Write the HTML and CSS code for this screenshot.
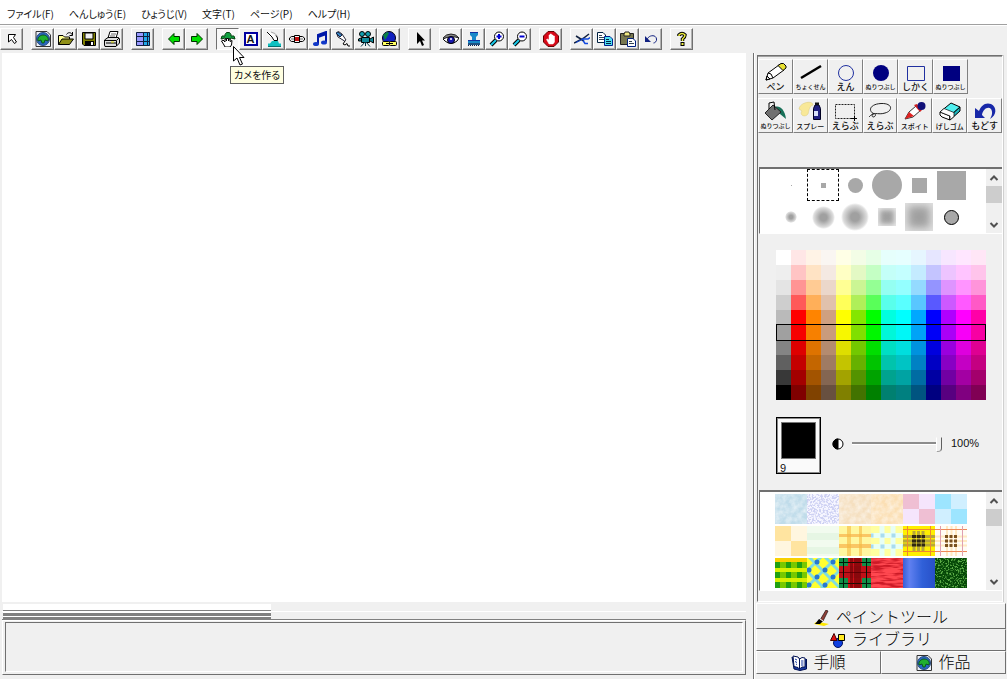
FILE: index.html
```html
<!DOCTYPE html>
<html lang="ja">
<head>
<meta charset="utf-8">
<title>ペイントツール</title>
<link rel="stylesheet" href="styles.css">
</head>
<body>
<svg class="defs" aria-hidden="true">
  <defs>
    <symbol id="doc" viewBox="0 0 16 16"><path d="M1 0.5H12L15.500 4V15.500H1Z" fill="#e8eef8" stroke="#333"/><circle cx="8" cy="8" r="6.500" fill="#2868c0" stroke="#284878"/><path d="M3 10C2 7 5 4 8 4C12 4 14 7 13 10L10 9L9 12H7L6 9Z" fill="#20b030" stroke="#084810" stroke-width=".8"/></symbol>
    <symbol id="arrow" viewBox="0 0 16 16"><path d="M2.500 8L8 2.500V5.500H13.500V10.500H8V13.500Z" fill="#00e000" stroke="#003000"/></symbol>
    <symbol id="lens" viewBox="0 0 16 16"><path d="M7 9L2 14" stroke="#000" stroke-width="4"/><path d="M7 9L2 14" stroke="#18c8e8" stroke-width="2"/><circle cx="10" cy="5.500" r="4.500" fill="#fff" stroke="#000"/></symbol>
    <symbol id="up" viewBox="0 0 10 10"><path d="M1.500 7L5 3.500L8.500 7" fill="none" stroke="#505050" stroke-width="2"/></symbol>
    <symbol id="down" viewBox="0 0 10 10"><path d="M1.500 3L5 6.500L8.500 3" fill="none" stroke="#505050" stroke-width="2"/></symbol>
    <filter id="soft" x="0" y="0" width="1" height="1"><feTurbulence type="fractalNoise" baseFrequency=".18" numOctaves="3"/><feColorMatrix values="0 0 0 0 1  0 0 0 0 1  0 0 0 0 1  1 0 0 0 -.3"/></filter>
    <filter id="specks" x="0" y="0" width="1" height="1"><feTurbulence type="fractalNoise" baseFrequency=".55" numOctaves="2"/><feColorMatrix values="0 0 0 0 .62  0 0 0 0 .64  0 0 0 0 .9  6 0 0 0 -2.600"/></filter>
    <filter id="leaf" x="0" y="0" width="1" height="1" color-interpolation-filters="sRGB"><feTurbulence type="fractalNoise" baseFrequency=".6" numOctaves="2"/><feColorMatrix values="0 0 0 0 .36  0 0 0 0 .68  0 0 0 0 .28  6 0 0 0 -3"/></filter>
    <filter id="cloth" x="0" y="0" width="1" height="1" color-interpolation-filters="sRGB"><feTurbulence type="fractalNoise" baseFrequency=".07 .4" numOctaves="2"/><feColorMatrix values="0 0 0 0 .8  0 0 0 0 .1  0 0 0 0 .15  4 0 0 0 -1.700"/></filter>
  </defs>
</svg>
<div class="app">
  <nav class="menu">
    <button>ファイル(F)</button><button>へんしゅう(E)</button><button>ひょうじ(V)</button><button>文字(T)</button><button>ページ(P)</button><button>ヘルプ(H)</button>
  </nav>
  <div class="toolbar">
    <div class="group">
      <button class="tool" aria-label="もどる"><svg viewBox="0 0 16 16"><path d="M4.500 3.500H11.500L9.500 6.500L12.500 11L10.500 12.500L7.500 8.500L4.500 11Z" fill="#fff" stroke="#000"/></svg></button>
    </div>
    <div class="group">
      <button class="tool" aria-label="新規"><svg><use href="#doc"/></svg></button>
      <button class="tool" aria-label="開く"><svg viewBox="0 0 16 16"><path d="M.5 13.500V4.500H5L6.500 6H11.500V8" fill="#ffff90" stroke="#000"/><path d="M.5 13.500L4 8H15.500L11.500 13.500Z" fill="#909018" stroke="#000"/><path d="M8.500 3.500C10 1 13 1 14.500 4M14.500 1V4.500H11.500" fill="none" stroke="#000"/></svg></button>
      <button class="tool" aria-label="保存"><svg viewBox="0 0 16 16"><path d="M1.500 1.500H14.500V14.500H3L1.500 13Z" fill="#808000" stroke="#000"/><path d="M4 2H12V8H4Z" fill="#f0f0f0" stroke="#000"/><path d="M4 10H13V14H4Z"/><path d="M10 11H12V14H10Z" fill="#fff"/></svg></button>
      <button class="tool" aria-label="印刷"><svg viewBox="0 0 16 16"><path d="M4 7L6 .5H14L12 7" fill="#fff" stroke="#000"/><path d="M7 3H12M6 5H11" stroke="#666"/><path d="M.5 9L4 6.500H14.500L15.500 8V12L12 15.500H1L.5 14Z" fill="#ddd" stroke="#000"/><path d="M1 9.500H12.500L15 7M12.500 10V15M2 12H12" fill="none" stroke="#000"/><path d="M7 11H10" stroke="#e0e000"/></svg></button>
    </div>
    <div class="group">
      <button class="tool" aria-label="画面"><svg viewBox="0 0 16 16"><path d="M1 1H15V15H1Z" fill="#9898ff"/><path d="M9 1H15V15H9Z" fill="#20a8e8"/><path d="M1.500 1.500H14.500V14.500H1.500ZM8.500 1V15M12.500 1V15M1 10.500H9M1 5.500H9M9 5.500H15M9 10.500H15" fill="none" stroke="#102040"/></svg></button>
    </div>
    <div class="group">
      <button class="tool" aria-label="前のページ"><svg><use href="#arrow"/></svg></button>
      <button class="tool" aria-label="次のページ"><svg class="flip"><use href="#arrow"/></svg></button>
    </div>
    <div class="group">
      <div class="tip-anchor">
        <button class="tool pressed" aria-label="カメを作る"><svg viewBox="0 0 16 16"><path d="M5 3.500L6.500 1.500H9.500L11 3.500V5H14L15 8L11 7L9 10H7L5 7L1 8L2 5H5Z" fill="#10a040" stroke="#064010"/><path d="M4 14L1.500 10L3 9L5 11V8H6.500V10V7.500H8.500V10V8H10V10.500L12 9.500L11.500 14L10 16H5Z" fill="#fff" stroke="#000"/></svg></button>
        <div class="tooltip" role="tooltip">カメを作る</div>
        <svg class="cursor" viewBox="0 0 12 20"><path d="M.5 .5V15L4 12L7 19L9.500 18L6.500 11.500H11Z" fill="#fff" stroke="#000"/></svg>
      </div>
      <button class="tool letter" aria-label="テキスト"><span>A</span></button>
      <button class="tool" aria-label="ボタン"><svg viewBox="0 0 16 16"><path d="M1 1L4 1.500L7 3L10 6L11.500 9.500H8L6 7L3 5Z" fill="#fff"/><path d="M1 1L6 6L8 9.500H11.500V7L10 4" fill="none" stroke="#000"/><path d="M5 1L9 2.500L12 6" fill="none" stroke="#aaa"/><path d="M4 12.500L6 10H12L13 12.500H15V15H2V12.500Z" fill="#10c0c0"/><path d="M2 15.500H15" stroke="#067070"/></svg></button>
      <button class="tool" aria-label="スライダー"><svg viewBox="0 0 16 16"><path d="M2.500 5.500H13.500L15.500 7V9L13.500 10.500H2.500L.5 9V7Z" fill="#eee" stroke="#000"/><path d="M2 8H14" stroke="#777"/><path d="M5.500 4.500H10.500V11.500H5.500Z" fill="#f4f4f4" stroke="#000"/><path d="M6 6H10V10H6Z" fill="#c01010"/></svg></button>
      <button class="tool" aria-label="メロディ"><svg viewBox="0 0 16 16"><path d="M6 13V4L14 1V11M6 6L14 3" fill="none" stroke="#0018a8" stroke-width="2"/><ellipse cx="4" cy="13" rx="3" ry="2" fill="#1038c8"/><ellipse cx="12" cy="11.500" rx="3" ry="2" fill="#1038c8"/></svg></button>
      <button class="tool" aria-label="録音"><svg viewBox="0 0 16 16"><path d="M1.500 2L3.500 .5L7 3L11 9L9.500 10L3 6Z" fill="#fff" stroke="#223"/><path d="M1 2L3 1L7 4L5 6Z" fill="#3888c8" stroke="#124"/><path d="M10 10L8 13L10 14L12 12.500L13 15H15" fill="none" stroke="#000"/></svg></button>
      <button class="tool" aria-label="ビデオ"><svg viewBox="0 0 16 16"><circle cx="4" cy="3" r="2.500" fill="#10a0b0" stroke="#000"/><circle cx="10" cy="3" r="2.500" fill="#10a0b0" stroke="#000"/><path d="M3.500 6.500H11.500V11.500H3.500ZM12 8L15.500 6V12L12 10M3 7L.5 8V10H3" fill="#108898" stroke="#000"/><path d="M7.500 11V15M7 11L3 15.500M8 11L12 15.500" stroke="#034"/></svg></button>
      <button class="tool" aria-label="リンク"><svg viewBox="0 0 16 16"><circle cx="8" cy="7" r="6.500" fill="#1020c0" stroke="#001"/><path d="M2 4L6 1L8 2L6 6L4 9Z" fill="#088048"/><rect x="1.500" y="10.500" width="7" height="4" rx="1" fill="#ffff60" stroke="#000"/><rect x="8.500" y="10.500" width="7" height="4" rx="1" fill="#ffff60" stroke="#000"/><path d="M5 12.500H12" stroke="#000"/></svg></button>
    </div>
    <div class="group">
      <button class="tool" aria-label="選ぶ"><svg viewBox="0 0 16 16"><path d="M5 1V13L8 10L10 15L12 14L10 9.500H13Z"/></svg></button>
    </div>
    <div class="group">
      <button class="tool" aria-label="見る"><svg viewBox="0 0 16 16"><path d="M0 8Q8 0 16 7L14 10Q8 15 2 10Z" fill="#fff" stroke="#000"/><path d="M0 7Q3 3 8 3Q13 3 16 7Q8 4 0 8Z" fill="#888" stroke="#222"/><circle cx="8" cy="9" r="3.500" fill="#1818b0" stroke="#000"/><circle cx="8" cy="8" r="1" fill="#fff"/></svg></button>
      <button class="tool" aria-label="スタンプ"><svg viewBox="0 0 16 16"><path d="M4 1H12V4L10 6V9H14V12H2V9H6V6L4 4Z" fill="#1888c8"/><path d="M4 1.500H12M2 9.500H14" stroke="#1030a0"/><path d="M2 12H14V14H2Z" fill="#205080"/><path d="M2 14.500H14" stroke="#102050" stroke-dasharray="1 1"/></svg></button>
      <button class="tool" aria-label="拡大"><svg viewBox="0 0 16 16"><use href="#lens"/><path d="M7.500 5.500H12.500M10 3V8" stroke="#0000d0" stroke-width="2"/></svg></button>
      <button class="tool" aria-label="縮小"><svg viewBox="0 0 16 16"><use href="#lens"/><path d="M7.500 5.500H12.500" stroke="#0000d0" stroke-width="2"/></svg></button>
    </div>
    <div class="group">
      <button class="tool" aria-label="止める"><svg viewBox="0 0 16 16"><path d="M5 .5H11L15.500 5V11L11 15.500H5L.5 11V5Z" fill="#d80818" stroke="#600"/><path d="M6 13L3.500 8.500L4.500 8L6 9V4H7V8V3H8.500V8V4H10V8V5H11.500V11L10 13Z" fill="#fff" stroke="#fff" stroke-width=".5"/></svg></button>
    </div>
    <div class="group">
      <button class="tool" aria-label="切り取り"><svg viewBox="0 0 16 16"><path d="M0 12L9 7.500L15 3M2 5L10 10" fill="none" stroke="#102040" stroke-width="1.500"/><path d="M2 11.500L9 8" stroke="#1048e0"/><path d="M8 8H14L16 6.500M9 9.500L11 12.500L14 12.500" fill="none" stroke="#1048e0" stroke-width="1.500"/></svg></button>
      <button class="tool" aria-label="コピー"><svg viewBox="0 0 16 16"><path d="M.5 1.500H6L8.500 4V11.500H.5Z" fill="#fff" stroke="#002040"/><path d="M2 4.500H5M2 6.500H7M2 8.500H7" stroke="#345"/><path d="M7.500 5.500H13L15.500 8V14.500H7.500Z" fill="#50e0f0" stroke="#002090"/><path d="M9 8.500H12M9 10.500H14M9 12.500H14" stroke="#024"/></svg></button>
      <button class="tool" aria-label="貼り付け"><svg viewBox="0 0 16 16"><path d="M.5 2.500H13.500V13.500H.5Z" fill="#777750" stroke="#222"/><path d="M4 3L5 1H9L10 3V5H4Z" fill="#f0e880" stroke="#222"/><path d="M7.500 7.500H13L15.500 10V15.500H7.500Z" fill="#fff" stroke="#002080"/><path d="M9 10.500H12M9 12.500H14" stroke="#345"/></svg></button>
      <button class="tool" aria-label="元に戻す"><svg viewBox="0 0 16 16"><path d="M2 5V11H8Z" fill="#102080"/><path d="M4 9C5 4 13 3 13.500 8C14 10 12 12 10.500 12" fill="none" stroke="#102080"/></svg></button>
    </div>
    <div class="group">
      <button class="tool" aria-label="ヘルプ"><svg viewBox="0 0 16 16"><path d="M5 5V4Q8 1 11 4Q11 6 8.500 8V10" fill="none" stroke="#000" stroke-width="3.500"/><path d="M5 5V4Q8 1 11 4Q11 6 8.500 8V10" fill="none" stroke="#f0f040" stroke-width="1.500"/><rect x="7" y="11.500" width="3" height="3" fill="#f0f040" stroke="#000"/></svg></button>
    </div>
  </div>
  <div class="work">
    <main class="stage">
      <div class="canvas"></div>
      <div class="splitter"><div class="grip"></div></div>
      <div class="command"><div class="command-box"></div></div>
    </main>
    <aside class="side">
      <section class="panel">
        <div class="paint-tools">
          <button><svg viewBox="0 0 24 20"><path d="M2 18L4 11L15 3L20 8L9 16Z" fill="#fff" stroke="#000"/><path d="M14 3.500L17 1.500H19.500L22 4V6L19 8.500Z" fill="#e8e030" stroke="#000"/><path d="M4 11L7 12L9 16M2 18L6 17L3 14Z" fill="none" stroke="#000"/></svg><span>ペン</span></button>
          <button><svg viewBox="0 0 24 20"><path d="M2 16L22 4" stroke="#000" stroke-width="2.500"/></svg><span class="long">ちょくせん</span></button>
          <button><svg viewBox="0 0 24 20"><circle cx="12" cy="11" r="7.500" fill="none" stroke="#2030a0"/></svg><span>えん</span></button>
          <button><svg viewBox="0 0 24 20"><circle cx="12" cy="11" r="8" fill="#000080"/></svg><span class="long">ぬりつぶし</span></button>
          <button><svg viewBox="0 0 24 20"><path d="M3.500 4.500H20.500V18.500H3.500Z" fill="none" stroke="#2030a0"/></svg><span>しかく</span></button>
          <button><svg viewBox="0 0 24 20"><path d="M4 4H21V19H4Z" fill="#000080"/></svg><span class="long">ぬりつぶし</span></button>
        </div>
        <div class="paint-tools">
          <button><svg viewBox="0 0 24 20"><path d="M12 6C16 4 22 8 23 18L17 13L14 8Z" fill="#187058"/><path d="M2 12L10 4L18 11L9 19Z" fill="#707070" stroke="#222"/><path d="M6 8V2L11 1L12 9" fill="none" stroke="#000"/></svg><span class="long">ぬりつぶし</span></button>
          <button><svg viewBox="0 0 24 20"><path d="M1 8C2 1 15 -1 15 4C11 5 11 10 10 13C7 17 1 14 4 10Z" fill="#f8e898" stroke="#d8c878" stroke-width=".5"/><path d="M15.500 7.500L17 4H21L22.500 7.500V18.500H15.500Z" fill="#202080" stroke="#002"/><path d="M16 10H20V15H16Z" fill="#d8e0f8"/><path d="M17 1.500H21V4H17Z" fill="#111"/></svg><span class="mid">スプレー</span></button>
          <button><svg viewBox="0 0 24 20"><path d="M2.500 3.500H21.500V17.500H2.500Z" fill="none" stroke="#222" stroke-dasharray="2 1"/><path d="M18 17.500H24M21.500 15V20" stroke="#000"/></svg><span>えらぶ</span></button>
          <button><svg viewBox="0 0 24 20"><path d="M6 13C-1 9 3 3 13 2.500C25 2 25 10 17 12C11 14 7 11 4 14C4 18 9 15 7 13C6 11 3 14 1 16" fill="none" stroke="#222"/></svg><span>えらぶ</span></button>
          <button><svg viewBox="0 0 24 20"><path d="M2 18L6 11L13 5L18 9L10 16Z" fill="#fff" stroke="#333"/><path d="M2 18L6 11L11 15Z" fill="#e02020"/><path d="M11 4L14 3L19 9L17 11Z" fill="#d02020"/><circle cx="18.500" cy="5" r="4" fill="#101078"/></svg><span class="mid">スポイト</span></button>
          <button><svg viewBox="0 0 24 20"><path d="M2 11L13 2L22 6L12 15Z" fill="#50f0f0" stroke="#000"/><path d="M2 11L12 15V19L4 16L2 14Z" fill="#fff" stroke="#000"/><path d="M12 15L22 6V10L12 19Z" fill="#20b8c0" stroke="#000"/><path d="M2 11L6 7.500L16 11.500V15.500L12 19V15Z" fill="#fff" stroke="#000" stroke-width=".7"/></svg><span class="mid">げしゴム</span></button>
          <button><svg viewBox="0 0 24 20"><path d="M2 7V17H12L9 14C10 8 15 5 18 8C20 11 19 15 17 18C24 14 24 6 18 3C12 1 8 5 6 10Z" fill="#1828a8"/></svg><span>もどす</span></button>
        </div>
        <div class="list brushes">
          <div class="cells">
            <button aria-label="点"><i class="b dot"></i></button>
            <button class="chosen" aria-label="四角 小"><i class="b sq5"></i></button>
            <button aria-label="丸 中"><i class="b round15"></i></button>
            <button aria-label="丸 大"><i class="b round30"></i></button>
            <button aria-label="四角 中"><i class="b sq15"></i></button>
            <button aria-label="四角 大"><i class="b sq29"></i></button>
            <button aria-label="ぼかし 小"><i class="b fuzzy12"></i></button>
            <button aria-label="ぼかし 中"><i class="b fuzzy22"></i></button>
            <button aria-label="ぼかし 大"><i class="b fuzzy28"></i></button>
            <button aria-label="四角ぼかし 中"><i class="b fsq18"></i></button>
            <button aria-label="四角ぼかし 大"><i class="b fsq28"></i></button>
            <button aria-label="ふちつき"><i class="b outlined"></i></button>
          </div>
          <div class="scroll"><button aria-label="上へ"><svg><use href="#up"/></svg></button><div class="thumb"></div><button class="end" aria-label="下へ"><svg><use href="#down"/></svg></button></div>
        </div>
        <div class="palette" id="palette"></div>
        <div class="current">
          <div class="swatch"><div class="ink"></div><span>9</span></div>
          <label class="contrast" for="opacity"><svg viewBox="0 0 12 12"><circle cx="6" cy="6" r="5" fill="#fff" stroke="#000"/><path d="M6 1A5 5 0 0 0 6 11Z" stroke="#000"/></svg></label>
          <input class="opacity" id="opacity" type="range" min="0" max="100" value="100" aria-label="不透明度">
          <output for="opacity">100%</output>
        </div>
        <div class="list textures">
          <div class="cells">
            <button class="t-ice" aria-label="氷"><svg><rect width="32" height="30" filter="url(#soft)"/></svg></button>
            <button class="t-speck" aria-label="砂"><svg><rect width="32" height="30" filter="url(#specks)"/></svg></button>
            <button class="t-marble" aria-label="大理石"><svg><rect width="32" height="30" filter="url(#soft)"/></svg></button>
            <button class="t-paper" aria-label="紙"><svg><rect width="32" height="30" filter="url(#soft)"/></svg></button>
            <button class="t-pink" aria-label="ピンク"></button>
            <button class="t-aqua" aria-label="水色"></button>
            <button class="t-cream" aria-label="クリーム"></button>
            <button class="t-mint" aria-label="ミント"></button>
            <button class="t-gingham" aria-label="黄チェック"></button>
            <button class="t-lemon" aria-label="レモン"><svg viewBox="0 0 32 30"><path d="M0 9.500H32M0 20.500H32M11 0V30M22 0V30" stroke="#e8fff4" stroke-width="5"/><path d="M-1.500 9.500H34M-1.500 20.500H34" stroke="#a8dcf0" stroke-width="4" stroke-dasharray="4 7"/></svg></button>
            <button class="t-tartan" aria-label="タータン"><svg viewBox="0 0 32 30"><path d="M0 10.500H32M0 15H32M0 19H32M11 5V26M15.500 5V26M20 5V26" stroke="#887860" stroke-opacity=".6" stroke-width="3"/><path d="M9 10.500H22M9 15H22M9 19H22" stroke="#302810" stroke-width="3" stroke-dasharray="4 .8"/><path d="M0 3.500H32M0 25.500H32M4.500 0V30M27.500 0V30" stroke="#f08830"/></svg></button>
            <button class="t-plaid" aria-label="白チェック"><svg viewBox="0 0 32 30"><path d="M0 10.500H32M0 15H32M0 19.500H32M12 0V30M16.500 0V30M21 0V30" stroke="#ffdca0" stroke-opacity=".6" stroke-width="2"/><path d="M10 10.500H23M10 15H23M10 19.500H23" stroke="#785020" stroke-width="3" stroke-dasharray="3 1.500"/><path d="M0 3.500H32M0 25.500H32" stroke="#f08858"/><path d="M5.500 0V30M27.500 0V30" stroke="#e0a0b0"/></svg></button>
            <button class="t-green" aria-label="緑チェック"></button>
            <button class="t-argyle" aria-label="水玉"><svg viewBox="0 0 32 30"><path d="M-2 -5L34 31M-2 11L18 31M14 -5L34 15M-2 15L18 -5M-2 31L34 -5M14 31L34 11" fill="none" stroke="#80dce0" stroke-width="3"/><g fill="#2878d0"><circle cx="10" cy="4" r="2.500"/><circle cx="26" cy="4" r="2.500"/><circle cx="2" cy="12" r="2.500"/><circle cx="18" cy="12" r="2.500"/><circle cx="10" cy="19" r="2.500"/><circle cx="26" cy="19" r="2.500"/><circle cx="2" cy="27" r="2.500"/><circle cx="18" cy="27" r="2.500"/></g></svg></button>
            <button class="t-red" aria-label="赤チェック"></button>
            <button class="t-cloth" aria-label="赤い布"><svg><rect width="32" height="30" filter="url(#cloth)"/></svg></button>
            <button class="t-blue" aria-label="青"></button>
            <button class="t-grass" aria-label="草"><svg><rect width="32" height="30" filter="url(#leaf)"/></svg></button>
          </div>
          <div class="scroll"><button aria-label="上へ"><svg><use href="#up"/></svg></button><div class="thumb"></div><button class="end" aria-label="下へ"><svg><use href="#down"/></svg></button></div>
        </div>
      </section>
      <div class="tabs">
        <button class="tab paint"><svg viewBox="0 0 16 16"><path d="M0 14Q2 11 5 12L15 14L10 16Z" fill="#ffe800"/><path d="M1 14L5 9L9 11L6 14Z"/><path d="M6 10L12 0L14 1L9 11Z" fill="#904038" stroke="#201010" stroke-width=".7"/><path d="M6 9L9 11" stroke="#fff"/></svg>ペイントツール</button>
        <button class="tab library"><svg viewBox="0 0 16 16"><circle cx="8" cy="11" r="4.500" fill="#1040e0" stroke="#001060"/><path d="M.5 8.500L4 1.500L7 8.500Z" fill="#e01010" stroke="#400"/><path d="M8.500 2.500H14.500V8.500H8.500Z" fill="#ffe820" stroke="#000"/></svg>ライブラリ</button>
        <button class="tab"><svg viewBox="0 0 16 16"><path d="M1 2L3 14L9 15.500L15.500 14V4" fill="#1838a0" stroke="#001050"/><path d="M2 1L7 2L8.500 4V14L7 12.500L3 11.500ZM8.500 4L11 2.500L14 3V12H11L8.500 14Z" fill="#fff" stroke="#001050"/><path d="M4 4L6 5M4 6.500L6 7.500M5 9L6 9.500M10 6H12.500M10 8H12.500M10 10H12.500" stroke="#1838a0"/></svg>手順</button>
        <button class="tab works"><svg><use href="#doc"/></svg>作品</button>
      </div>
    </aside>
  </div>
</div>
<script src="palette.js"></script>
</body>
</html>
```

FILE: styles.css
```css
* { box-sizing: border-box; }
body {
  margin: 0;
  background: #f0f0f0;
  color: #111;
  font-family: "Liberation Sans", "Noto Sans CJK JP", sans-serif;
  font-size: 11px;
}
button {
  margin: 0;
  padding: 0;
  border: 0;
  background: none;
  color: inherit;
  font: inherit;
}
.defs { position: absolute; width: 0; height: 0; }
.app { display: flex; flex-direction: column; height: 100vh; }

.menu {
  display: flex;
  flex: none;
  gap: 15px;
  height: 25px;
  padding: 3px 7px 0;
  border-bottom: 1px solid #a0a0a0;
  background: #fff;
}
.menu button {
  font-family: "Noto Sans CJK JP", sans-serif;
  font-size: 10px;
  font-feature-settings: "palt";
  white-space: nowrap;
}

.toolbar {
  display: flex;
  flex: none;
  gap: 8px;
  height: 28px;
  padding-top: 2px;
  border-top: 1px solid #fff;
}
.group { display: flex; }
.tool {
  display: flex;
  align-items: center;
  justify-content: center;
  width: 23px;
  height: 22px;
  border: 1px solid;
  border-color: #fff #707070 #707070 #fff;
  box-shadow: inset -1px -1px #b0b0b0;
}
.tool svg { width: 16px; height: 16px; }
.flip { transform: scaleX(-1); }
.pressed {
  border-color: #707070 #fff #fff #707070;
  box-shadow: none;
  background: #f8f8f8;
}
.letter span {
  width: 14px;
  height: 14px;
  border: 2px solid #0000a0;
  background: #fff;
  font-size: 11px;
  font-weight: bold;
  line-height: 10px;
}
.tip-anchor { position: relative; }
.cursor { position: absolute; top: 18px; left: 17px; width: 12px; height: 20px; }
.tooltip {
  position: absolute;
  z-index: 1;
  top: 38px;
  left: 14px;
  padding: 0 3px;
  border: 1px solid #606060;
  background: #ffffe1;
  font-family: "Noto Sans CJK JP", sans-serif;
  font-size: 10px;
  font-feature-settings: "palt";
  line-height: 16px;
  white-space: nowrap;
}

.work { display: flex; flex: 1; min-height: 0; }
.stage { display: flex; flex: 1; flex-direction: column; min-width: 0; padding: 0 7px 4px 2px; }
.canvas { flex: 1; background: #fff; }
.splitter {
  flex: none;
  height: 16px;
  margin-top: 2px;
  border-bottom: 1px solid #808080;
  background: linear-gradient(#f0f0f0 7px, #fff 7px, #fff 8px, #f0f0f0 8px);
}
.grip {
  width: 36%;
  height: 15px;
  margin-left: 1px;
  background: linear-gradient(#fff 6px, #808080 6px, #808080 7px, #fff 7px, #fff 9px, #808080 9px, #808080 12px, #fff 12px, #fff 13px, #808080 13px);
}
.command {
  flex: none;
  padding: 1px 2px 2px;
  border: 1px solid;
  border-color: #fff #707070 #707070 #fff;
}
.command-box {
  height: 50px;
  border: 1px solid;
  border-color: #707070 #fff #fff #707070;
}

.side {
  display: flex;
  flex: none;
  flex-direction: column;
  width: 254px;
  padding: 2px 0 5px 2px;
  border-left: 1px solid #707070;
  box-shadow: inset 1px 0 #fff;
}
.panel {
  display: flex;
  flex: 1;
  flex-direction: column;
  margin: 0 4px 0 1px;
  border: 1px solid;
  border-color: #707070 #fff #fff #707070;
  box-shadow: inset 0 1px #a0a0a0, 1px 0 #d0d0d0;
  padding-top: 3px;
}
.paint-tools { display: flex; margin-bottom: 4px; }
.paint-tools button {
  display: flex;
  flex-direction: column;
  align-items: center;
  width: 35px;
  height: 35px;
  border: 1px solid;
  border-color: #fff #808080 #808080 #fff;
  font-family: "Noto Sans CJK JP", sans-serif;
  font-weight: 500;
  line-height: 10px;
  white-space: nowrap;
}
.paint-tools svg { width: 24px; height: 20px; margin-top: 2px; }
.paint-tools span { font-size: 9px; }
.paint-tools .mid { font-size: 7px; }
.paint-tools .long { font-size: 6px; }

.list {
  display: flex;
  justify-content: space-between;
  margin-left: 1px;
  border: 1px solid;
  border-width: 2px 0 1px 1px;
  border-color: #707070 #fff #fff #707070;
  background: #fff;
}
.brushes { height: 67px; margin-top: 30px; }
.cells { display: grid; grid-template-columns: repeat(6, 32px); margin-left: 15px; }
.cells button { display: flex; align-items: center; justify-content: center; height: 32px; }
.brushes .cells { height: 64px; overflow: hidden; }
.cells .chosen { border: 1px dashed #000; }
.b { background: #a8a8a8; }
.dot { width: 1px; height: 1px; }
.sq5 { width: 5px; height: 5px; }
.sq15 { width: 15px; height: 15px; }
.sq29 { width: 29px; height: 29px; }
.round15 { width: 15px; height: 15px; border-radius: 50%; }
.round30 { width: 30px; height: 30px; border-radius: 50%; }
.fuzzy12, .fuzzy22, .fuzzy28 { border-radius: 50%; background: radial-gradient(closest-side, #a0a0a0 30%, #ddd 85%, #fff); }
.fuzzy12 { width: 12px; height: 12px; }
.fuzzy22 { width: 23px; height: 23px; }
.fuzzy28 { width: 28px; height: 28px; }
.fsq18, .fsq28 { background: #a0a0a0; }
.fsq18 { width: 18px; height: 18px; box-shadow: inset 0 0 5px 2px #e8e8e8; }
.fsq28 { width: 28px; height: 28px; box-shadow: inset 0 0 8px 3px #e4e4e4; }
.outlined { width: 15px; height: 15px; border: 1px solid #000; border-radius: 50%; }

.scroll { display: flex; flex-direction: column; width: 16px; background: #f0f0f0; }
.scroll button { display: flex; align-items: center; justify-content: center; height: 17px; }
.scroll svg { width: 10px; height: 10px; }
.thumb { height: 17px; background: #cdcdcd; }
.scroll .end { margin-top: auto; }

.palette {
  display: grid;
  position: relative;
  grid-template-columns: repeat(14, 15px);
  grid-auto-rows: 15px;
  margin: 16px 0 0 18px;
}
.row-mark {
  position: absolute;
  top: 74px;
  left: 0;
  width: 210px;
  height: 17px;
  border: 1px solid #000;
  pointer-events: none;
}

.current { display: flex; align-items: flex-start; margin: 17px 0 16px 18px; }
.swatch {
  width: 45px;
  height: 57px;
  padding: 3px;
  border: 1px solid #000;
  outline: 1px solid #888;
  outline-offset: -2px;
  background: #fafafa;
  line-height: 16px;
}
.ink { height: 37px; margin: 1px; border: 1px solid #777; background: #000; }
.contrast { display: flex; margin: 21px 0 0 11px; }
.contrast svg { width: 12px; height: 12px; }
.opacity {
  appearance: none;
  width: 90px;
  height: 15px;
  margin: 20px 9px 0 8px;
  background: none;
}
.opacity::-webkit-slider-runnable-track {
  height: 15px;
  background: linear-gradient(transparent 5px, #8c8c8c 5px, #8c8c8c 7px, #fff 7px, #fff 8px, transparent 8px);
}
.opacity::-webkit-slider-thumb {
  appearance: none;
  width: 6px;
  height: 15px;
  border: 1px solid;
  border-color: #f0f0f0 #606060 #a0a0a0 #fff;
  border-bottom-right-radius: 4px;
  background: #f0f0f0;
}
.current output { margin-top: 20px; line-height: 13px; }

.textures { height: 101px; margin-bottom: 10px; }
.textures .cells { align-content: start; row-gap: 2px; padding-top: 2px; overflow: hidden; }
.textures .cells button { height: 30px; overflow: hidden; }
.textures .cells svg { width: 32px; height: 30px; }
.t-ice { background: #c0dcea; }
.t-speck { background: #f6f6ff; }
.t-marble { background: #f5dfbf; }
.t-paper { background: #fbdfb4; }
.t-pink { background: conic-gradient(#f5e5fc 25%, #efbfd3 25% 50%, #f5e5fc 50% 75%, #efbfd3 75%); }
.t-aqua { background: conic-gradient(#d0efff 25%, #9de5ff 25% 50%, #d0efff 50% 75%, #9de5ff 75%); }
.t-cream { background: conic-gradient(#fff6df 25%, #ffe4a0 25% 50%, #fff6df 50% 75%, #ffe4a0 75%); }
.t-mint { background: repeating-linear-gradient(#f2fbef 0 7px, #e6f6e4 7px 14px); }
.t-gingham {
  background:
    linear-gradient(90deg, transparent 8px, #f5b94199 8px 12px, transparent 12px 20px, #f5b94199 20px 23px, transparent 23px),
    linear-gradient(#fff7a0 8px, #fac664 8px 11px, #fff7a0 11px 18px, #fac664 18px 22px, #fff7a0 22px);
}
.t-lemon { background: #ffffa0; }
.t-tartan { background: #ffef00; }
.t-plaid { background: #fffcf4; }
.t-green {
  background:
    linear-gradient(#f8d000 4px, transparent 4px 10px, #d8f000 10px 14px, transparent 14px 20px, #d8f000 20px 24px, transparent 24px),
    repeating-linear-gradient(90deg, #20a010 0 5px, #78c800 5px 11px);
}
.t-argyle { background: #ffff30; }
.t-red {
  background:
    linear-gradient(90deg, transparent 4px, #001808 4px 5px, transparent 5px 11px, #50000080 11px 14px, transparent 14px 15px, #50000080 15px 22px, transparent 22px 27px, #001808 27px 28px, transparent 28px),
    linear-gradient(transparent 4px, #001808 4px 5px, transparent 5px 8px, #c01018 8px 14px, #700008 14px 15px, #c01018 15px 20px, transparent 20px 25px, #001808 25px 26px, transparent 26px),
    linear-gradient(90deg, #109048 9px, #d01018 9px 23px, #109048 23px);
}
.t-cloth { background: #ff4850; }
.t-blue { background: linear-gradient(90deg, #3860d8, #6080f0 20%, #3060d8 60%, #2850c8); }
.t-grass { background: #064808; }

.tabs { display: grid; grid-template-columns: 1fr 1fr; margin: 1px 1px 0 0; }
.tab {
  display: flex;
  align-items: center;
  justify-content: center;
  gap: 6px;
  height: 23px;
  border: 1px solid;
  border-color: #fff #707070 #707070 #fff;
  color: #000;
  font-size: 16px;
  font-weight: 300;
  line-height: 18px;
  white-space: nowrap;
}
.tab svg { width: 16px; height: 16px; }
.paint, .library { grid-column: 1 / -1; }
.paint { height: 26px; padding-top: 4px; }
.library { height: 22px; border-top-color: #f0f0f0; }
```

FILE: palette.js
```js
const tints = [0.9, 0.77, 0.58, 0.35];
const shades = [1, 0.97, 0.87, 0.77, 0.64, 0.5];
const grays = [255, 238, 228, 206, 186, 160, 132, 96, 56, 0];
const hues = [
  [255, 0, 0], [255, 132, 0], [207, 160, 128], [255, 255, 0], [132, 230, 0],
  [0, 255, 0], [0, 255, 224], [0, 255, 255], [0, 168, 255], [0, 0, 255],
  [176, 0, 255], [255, 0, 255], [255, 0, 168]
];
const palette = document.getElementById("palette");

function addCell(rgb, label) {
  const cell = document.createElement("button");
  cell.style.backgroundColor = `rgb(${rgb.map(Math.round).join(",")})`;
  cell.setAttribute("aria-label", label);
  palette.append(cell);
}

for (let row = 0; row < 10; row++) {
  addCell([grays[row], grays[row], grays[row]], `色 ${row}-0`);
  hues.forEach((hue, i) => {
    const rgb = row < 4
      ? hue.map(c => c + (255 - c) * tints[row])
      : hue.map(c => c * shades[row - 4]);
    addCell(rgb, `色 ${row}-${i + 1}`);
  });
}
const mark = document.createElement("div");
mark.className = "row-mark";
palette.append(mark);
```
